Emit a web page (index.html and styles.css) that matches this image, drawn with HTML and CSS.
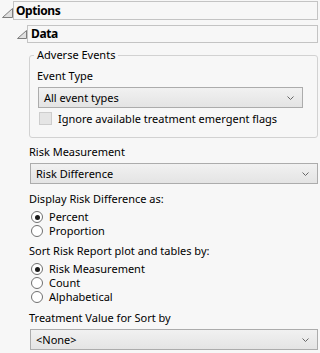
FILE: index.html
```html
<!DOCTYPE html>
<html lang="en">
<head>
<meta charset="UTF-8">
<title>Options</title>
<link rel="stylesheet" href="styles.css">
</head>
<body>
<div class="outline">
  <div class="head">
    <svg class="tri" width="11" height="10" viewBox="0 0 11 10"><path d="M10.5 0.5 L10.5 9.5 L0.5 9.5 Z" fill="#e0e0e0" stroke="#7d7d7d" stroke-width="1"/></svg>
    <div class="title title-top">Options</div>
  </div>
  <div class="sub">
    <div class="head">
      <svg class="tri tri-sub" width="10" height="9" viewBox="0 0 10 9"><path d="M9.5 0.5 L9.5 8.5 L0.5 8.5 Z" fill="#e0e0e0" stroke="#7d7d7d" stroke-width="1"/></svg>
      <div class="title title-sub">Data</div>
    </div>
    <div class="content">
      <fieldset class="group">
        <legend>Adverse Events</legend>
        <div class="label label-in">Event Type</div>
        <div class="select inner">All event types
          <svg class="chev" width="7" height="4" viewBox="0 0 7 4"><path d="M0.5 0.5 L3.5 3.5 L6.5 0.5" fill="none" stroke="#666" stroke-width="1"/></svg>
        </div>
        <div class="check"><span class="box"></span>Ignore available treatment emergent flags</div>
      </fieldset>

      <div class="label label-risk">Risk Measurement</div>
      <div class="select">Risk Difference
        <svg class="chev" width="7" height="4" viewBox="0 0 7 4"><path d="M0.5 0.5 L3.5 3.5 L6.5 0.5" fill="none" stroke="#666" stroke-width="1"/></svg>
      </div>

      <div class="label label-display">Display Risk Difference as:</div>
      <div class="radios">
        <div class="radio on"><span class="dot"></span>Percent</div>
        <div class="radio"><span class="dot"></span>Proportion</div>
      </div>

      <div class="label label-sort">Sort Risk Report plot and tables by:</div>
      <div class="radios">
        <div class="radio on"><span class="dot"></span>Risk Measurement</div>
        <div class="radio"><span class="dot"></span>Count</div>
        <div class="radio"><span class="dot"></span>Alphabetical</div>
      </div>

      <div class="label label-treat">Treatment Value for Sort by</div>
      <div class="select">&lt;None&gt;
        <svg class="chev" width="7" height="4" viewBox="0 0 7 4"><path d="M0.5 0.5 L3.5 3.5 L6.5 0.5" fill="none" stroke="#666" stroke-width="1"/></svg>
      </div>
    </div>
  </div>
</div>
</body>
</html>
```

FILE: styles.css
```css
body {
    margin: 0;
    background: #f7f7f7;
    font-family: "Noto Sans", "DejaVu Sans", sans-serif;
    font-size: 11px;
    color: #000;
}
.outline {
    padding: 1px 2px 0 2px;
}
.head {
    display: flex;
    align-items: flex-end;
}
.tri {
    display: block;
    flex: none;
    margin-bottom: 2px;
}
.tri-sub {
    margin-bottom: 4px;
}
.title {
    flex: 1;
    height: 17px;
    line-height: 17px;
    border: 1px solid #c4c4c4;
    background: #f7f7f7;
    font-weight: bold;
    font-size: 12px;
    letter-spacing: -0.4px;
    padding-left: 2px;
}
.title-sub {
    height: 16px;
    line-height: 16px;
    padding-left: 3px;
}
.sub {
    margin-top: 5px;
    padding-left: 15px;
}
.content {
    padding-left: 12px;
}
.group {
    margin: 5px 0 0 0;
    padding: 0 7px 12px 7px;
    border: 1px solid #d2d2d2;
    border-radius: 3px;
    min-width: 0;
}
.group legend {
    padding: 0 3px;
    margin-left: -3px;
    height: 14px;
    line-height: 14px;
}
.label {
    height: 14px;
    line-height: 14px;
    white-space: nowrap;
}
.label-in { margin-top: 7px; }
.label-risk { margin-top: 7px; }
.label-display { margin-top: 8px; }
.label-sort { margin-top: 6px; }
.label-treat { margin-top: 7px; }
.select {
    display: flex;
    justify-content: space-between;
    align-items: center;
    margin: 4px 0 0 1px;
    height: 19px;
    padding: 0 8px 0 5px;
    border: 1px solid #acacac;
    background: linear-gradient(#f1f1f1, #e4e4e4);
}
.select.inner {
    margin-right: 7px;
}
.chev {
    display: block;
    flex: none;
}
.check {
    display: flex;
    align-items: center;
    margin-top: 4px;
    height: 13px;
    line-height: 13px;
    white-space: nowrap;
}
.box {
    flex: none;
    width: 11px;
    height: 11px;
    border: 1px solid #cdcdcd;
    background: #e5e5e5;
    margin: 0 6px 0 2px;
}
.radios {
    margin-top: 4px;
    padding-left: 2px;
}
.radio {
    display: flex;
    align-items: center;
    height: 14px;
    line-height: 14px;
}
.dot {
    flex: none;
    position: relative;
    width: 10px;
    height: 10px;
    border: 1px solid #707070;
    border-radius: 50%;
    background: #fff;
    margin-right: 6px;
}
.radio.on .dot::after {
    content: "";
    position: absolute;
    left: 2.5px;
    top: 2.5px;
    width: 5px;
    height: 5px;
    border-radius: 50%;
    background: #1b1b1b;
}
```
